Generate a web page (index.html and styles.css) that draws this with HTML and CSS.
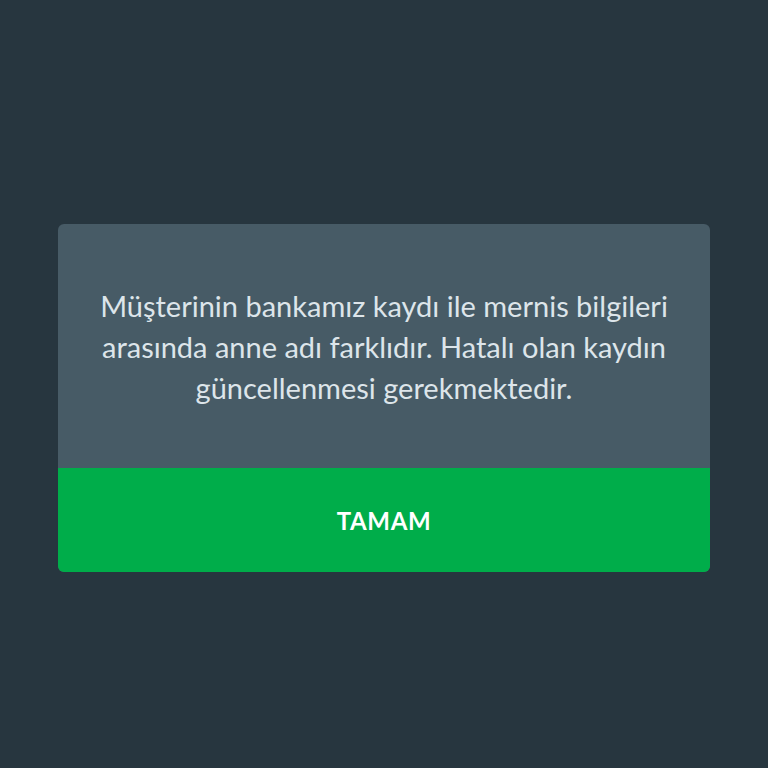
FILE: index.html
```html
<html><head><title>Uyarı</title>
<link rel="stylesheet" href="styles.css">
</head>
<body>
  <div class="screen">
    <div class="dialog">
      <div class="dialog-message">
        Müşterinin bankamız kaydı ile mernis bilgileri arasında anne adı farklıdır. Hatalı olan kaydın güncellenmesi gerekmektedir.
      </div>
      <div class="dialog-button">TAMAM</div>
    </div>
  </div>
</body>
</html>
```

FILE: styles.css
```css
  body, html {
    margin: 0;
    padding: 0;
    font-family: 'Lato', sans-serif;
    background: #27363f;
    height: 100%;
    overflow: hidden;
  }
  .screen {
    height: 100vh;
    box-sizing: border-box;
    padding: 28px 58px 0;
    display: flex;
    flex-direction: column;
    justify-content: center;
  }
  .dialog {
    background: #475b66;
    border-radius: 6px;
    overflow: hidden;
  }
  .dialog-message {
    padding: 61px 28px 60px;
    color: #dde5ea;
    font-size: 29px;
    line-height: 41px;
    text-align: center;
  }
  .dialog-button {
    background: #00ad4a;
    color: #fff;
    height: 104px;
    display: flex;
    align-items: center;
    justify-content: center;
    font-size: 24px;
    font-weight: 700;
    letter-spacing: 0.6px;
  }
```
